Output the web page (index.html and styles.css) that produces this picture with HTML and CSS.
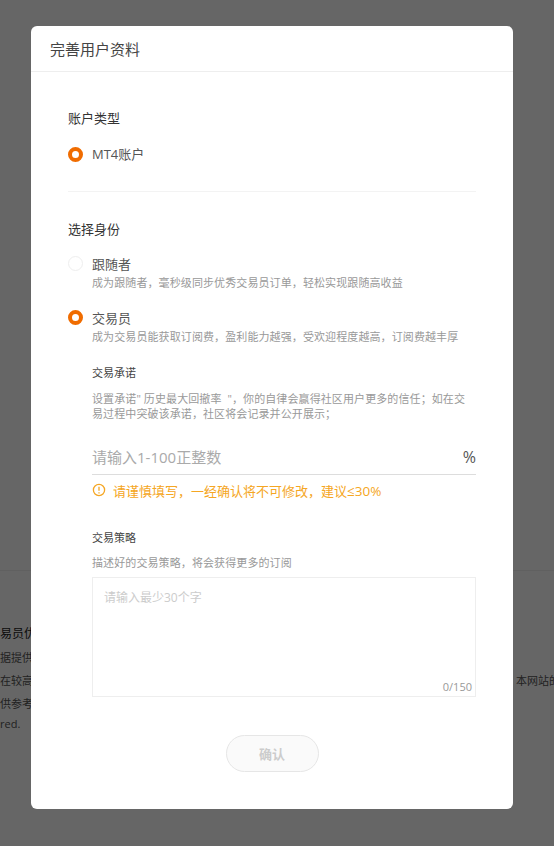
FILE: index.html
```html
<!DOCTYPE html>
<html lang="zh-CN">
<head>
<meta charset="utf-8">
<title>完善用户资料</title>
<link rel="stylesheet" href="styles.css">
</head>
<body>
<div class="page">
  <div class="page-text">
    <div class="bg-head">易员优</div>
    <div class="bg-line first">据提供服</div>
    <div class="bg-line split"><span>在较高风</span><span>本网站的</span></div>
    <div class="bg-line">供参考，</div>
    <div class="bg-line last">red.</div>
  </div>
</div>
<div class="overlay">
  <section class="modal">
    <header class="modal-head">完善用户资料</header>
    <div class="modal-body">
      <h2 class="label">账户类型</h2>
      <div class="radio-row account">
        <span class="radio on"></span><span class="radio-name">MT4账户</span>
      </div>
      <hr class="divider">
      <h2 class="label">选择身份</h2>
      <div class="role follower">
        <span class="radio"></span>
        <div>
          <div class="radio-name">跟随者</div>
          <p class="hint">成为跟随者，毫秒级同步优秀交易员订单，轻松实现跟随高收益</p>
        </div>
      </div>
      <div class="role trader">
        <span class="radio on"></span>
        <div>
          <div class="radio-name">交易员</div>
          <p class="hint">成为交易员能获取订阅费，盈利能力越强，受欢迎程度越高，订阅费越丰厚</p>
        </div>
      </div>
      <div class="trader-form">
        <h3 class="sub">交易承诺</h3>
        <p class="hint para">设置承诺"&nbsp;历史最大回撤率&nbsp;&nbsp;"，你的自律会赢得社区用户更多的信任；如在交易过程中突破该承诺，社区将会记录并公开展示；</p>
        <div class="rate">
          <span class="rate-holder">请输入1-100正整数</span><span class="rate-unit">%</span>
        </div>
        <div class="warn">
          <svg class="warn-icon" viewBox="0 0 14 14" aria-hidden="true"><circle cx="7" cy="7" r="5.6"/><path d="M7 3.8v4M7 9.2v1.2"/></svg>
          <span>请谨慎填写，一经确认将不可修改，建议<span class="warn-num">≤30%</span></span>
        </div>
        <h3 class="sub strategy">交易策略</h3>
        <p class="hint strategy-hint">描述好的交易策略，将会获得更多的订阅</p>
        <div class="area">
          <span class="area-holder">请输入最少30个字</span>
          <span class="area-count">0/150</span>
        </div>
      </div>
      <div class="actions"><button class="confirm" type="button">确认</button></div>
    </div>
  </section>
</div>
</body>
</html>
```

FILE: styles.css
```css
* { box-sizing: border-box; }
html, body { margin: 0; padding: 0; height: 100%; }
body {
  font-family: "Open Sans", "Noto Sans CJK SC", sans-serif;
  background: #fff;
  overflow: hidden;
  position: relative;
}
.page { height: 846px; padding-top: 570px; }
.page-text {
  height: 276px;
  border-top: 1px solid #f0f0f0;
  padding-top: 54px;
  color: #555;
  font-size: 11px;
}
.bg-head { font-size: 12px; color: #222; line-height: 18px; }
.bg-line { line-height: 23px; }
.bg-line.first { margin-top: 3px; }
.bg-line.last { margin-top: -3px; }
.bg-line.split { display: grid; grid-template-columns: 516px 1fr; white-space: nowrap; overflow: hidden; }
.overlay {
  position: absolute;
  inset: 0;
  background: rgba(0, 0, 0, 0.6);
  padding: 26px 41px 0 31px;
}
.modal {
  width: 482px;
  height: 783px;
  background: #fff;
  border-radius: 6px;
  display: flex;
  flex-direction: column;
}
.modal-head {
  height: 46px;
  padding: 0 19px;
  font-size: 15px;
  line-height: 47px;
  color: #444;
  border-bottom: 1px solid #eee;
}
.modal-body { padding: 36px 37px 0; flex: 1; }
.label {
  margin: 0;
  font-size: 13px;
  font-weight: 400;
  line-height: 20px;
  color: #333;
}
.radio-row { display: flex; align-items: center; }
.account { margin-top: 16px; height: 20px; }
.radio {
  flex: none;
  width: 15px;
  height: 15px;
  border-radius: 50%;
  border: 1px solid #eee;
  background: #fff;
  margin-right: 9px;
}
.radio.on { border: 4.5px solid #f06c00; }
.radio-name { font-size: 13px; line-height: 20px; color: #555; }
.divider {
  margin: 27px 0 27px;
  border: 0;
  border-top: 1px solid #f3f3f3;
}
.role { display: flex; align-items: flex-start; }
.role .radio { margin-top: 2px; }
.follower { margin-top: 15px; }
.trader { margin-top: 16px; }
.hint {
  margin: 0;
  font-size: 11px;
  line-height: 18px;
  color: #999;
  letter-spacing: 0.1px;
}
.trader-form { margin-left: 24px; margin-top: 18px; }
.sub {
  margin: 0;
  font-size: 11px;
  font-weight: 400;
  line-height: 18px;
  color: #444;
}
.para { margin-top: 9px; line-height: 15px; }
.rate {
  margin-top: 18px;
  height: 36px;
  border-bottom: 1px solid #ddd;
  display: flex;
  justify-content: space-between;
  align-items: center;
  font-size: 15px;
}
.rate-holder { color: #aaa; }
.rate-unit { color: #555; font-size: 16px; }
.warn {
  margin-top: 5px;
  display: flex;
  align-items: center;
  height: 20px;
  font-size: 13px;
  color: #f5a623;
}
.warn-num { font-size: 13.5px; }
.warn-icon {
  width: 14px;
  height: 14px;
  margin-right: 7px;
  fill: none;
  stroke: #f5a623;
  stroke-width: 1.3;
}
.strategy { margin-top: 29px; }
.strategy-hint { margin-top: 7px; }
.area {
  margin-top: 5px;
  height: 120px;
  border: 1px solid #eee;
  position: relative;
  padding: 11px 11px;
}
.area-holder { font-size: 12px; color: #ccc; line-height: 18px; display: block; }
.area-count {
  position: absolute;
  right: 3px;
  bottom: 2px;
  font-size: 11px;
  color: #999;
}
.actions { display: flex; justify-content: center; margin-top: 38px; }
.confirm {
  width: 93px;
  height: 37px;
  border-radius: 19px;
  border: 1px solid #e6e6e6;
  background: #fafafa;
  color: #ccc;
  font: 700 13px "Noto Sans CJK SC", sans-serif;
}
```
